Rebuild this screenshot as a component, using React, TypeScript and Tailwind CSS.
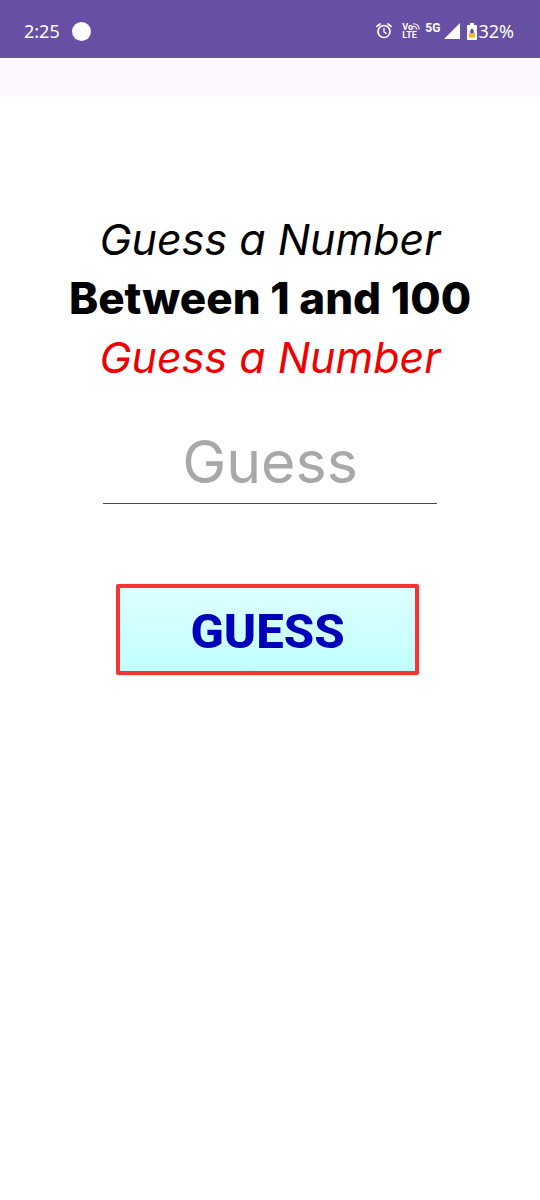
function AlarmIcon() {
  return (
    <svg viewBox="0 0 16 18" className="h-[18px] w-4" fill="none" stroke="currentColor" aria-hidden="true">
      <circle cx="8" cy="9.5" r="6" strokeWidth="1.7" />
      <path d="M8 6v4l2.5 1.7" strokeWidth="1.4" />
      <path d="M1 4.4L4 2M15 4.4L12 2" strokeWidth="1.7" strokeLinecap="round" />
    </svg>
  );
}

function VolteIcon() {
  return (
    <div className="relative flex w-[18px] flex-col text-[9px] leading-[8px] font-bold">
      <span>Vo</span>
      <span>LTE</span>
      <svg viewBox="0 0 7 7" className="absolute top-0 right-0 size-[7px]" fill="none" stroke="currentColor" aria-hidden="true">
        <path d="M0 .8Q5.8 .8 6.2 6.5M0 3.2Q3.4 3.2 3.8 6.5" strokeWidth="1.1" />
        <circle cx="1" cy="6" r=".6" fill="currentColor" stroke="none" />
      </svg>
    </div>
  );
}

function StatusBar() {
  return (
    <header className="flex h-[58px] items-center justify-between bg-[#674fa3] pt-1 pr-[26px] pl-6 font-['Noto_Sans','Open_Sans',sans-serif] text-white">
      <div className="flex items-center gap-3">
        <span className="text-[18px] leading-6">2:25</span>
        <span className="size-[19px] rounded-full bg-white" />
      </div>
      <div className="flex items-center font-['Roboto',sans-serif]">
        <AlarmIcon />
        <div className="ml-[10px]">
          <VolteIcon />
        </div>
        <span className="ml-[5px] pb-[7px] text-[12px] leading-4 font-bold">5G</span>
        <svg viewBox="0 0 16 16" className="ml-[4px] size-4" fill="currentColor" aria-hidden="true">
          <path d="M16 0v16H0z" />
        </svg>
        <svg viewBox="0 0 10 17" className="ml-[7px] h-[17px] w-[10px]" aria-hidden="true">
          <path d="M3 0h4v2h2.2q.8 0 .8.8v13.4q0 .8-.8.8H.8q-.8 0-.8-.8V2.8Q0 2 .8 2H3z" fill="white" />
          <path d="M2 10h6v4.5H2z" fill="#eeb72b" />
          <path d="M5 5l1.8 2.5V10H3.2V7.5z" fill="#674fa3" />
        </svg>
        <span className="ml-px font-['Noto_Sans','Open_Sans',sans-serif] text-[18px] leading-6">32%</span>
      </div>
    </header>
  );
}

export default function App() {
  return (
    <div className="min-h-screen bg-white font-['Inter',sans-serif]">
      <StatusBar />
      <div className="h-[38px] bg-[#fef7ff]" />
      <main className="flex flex-col items-center pt-[114px]">
        <h1 className="text-center text-[43px] leading-[59px] text-black">
          <span className="block italic [font-feature-settings:'cv11']">Guess a Number</span>
          <span className="block text-[44px] font-extrabold">Between 1 and 100</span>
          <span className="block text-[#f00000] italic [font-feature-settings:'cv11']">Guess a Number</span>
        </h1>
        <form className="flex w-full flex-col items-center" onSubmit={(e) => e.preventDefault()}>
          <input
            type="text"
            inputMode="numeric"
            aria-label="Guess"
            placeholder="Guess"
            className="mt-[30px] h-[87px] w-[62%] border-b border-[#444444] bg-transparent pt-1 text-center text-[59px] text-black outline-none placeholder:text-[#a8a8a8]"
          />
          <button
            type="submit"
            className="mt-20 mr-[5px] h-[91px] w-[56%] rounded-xs border-4 border-[#f53434] bg-linear-to-b from-[#dcffff] to-[#c2ffff] pt-1 font-['Roboto',sans-serif] text-[49px] leading-none font-extrabold text-[#0000bb] shadow-[1px_0_2px_#b8dede]"
          >
            GUESS
          </button>
        </form>
      </main>
    </div>
  );
}
